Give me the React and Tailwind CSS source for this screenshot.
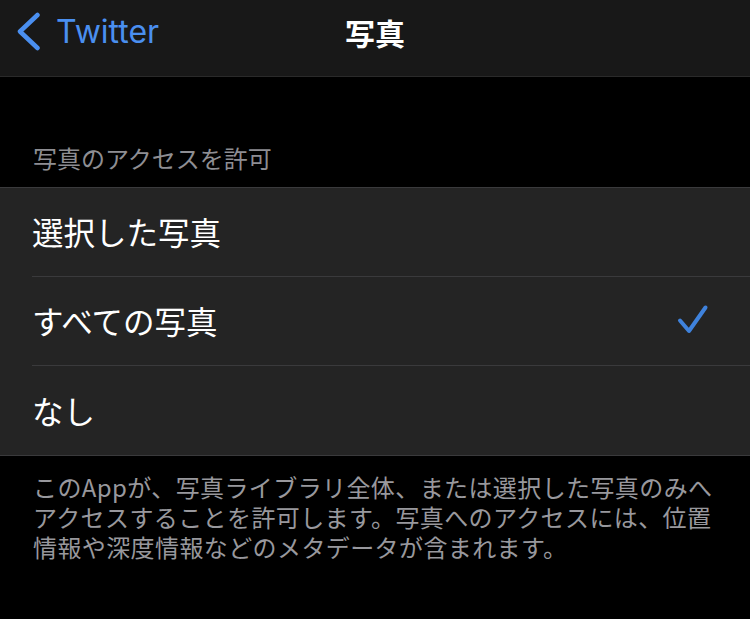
import React from "react";

const cjk = { fontFamily: '"Noto Sans CJK JP", "Noto Sans", sans-serif' };

function Row({ label, checked, last }) {
  return (
    <div className="flex">
      <div className="w-[32px] shrink-0" />
      <div
        className={
          "flex-1 h-[89px] flex items-center justify-between pr-[40px] " +
          (last ? "" : "border-b border-[#3a3a3c]")
        }
      >
        <span className="text-[31.5px] text-white leading-none" style={cjk}>
          {label}
        </span>
        {checked && (
          <svg width="34" height="34" viewBox="0 0 34 34" className="mr-[1px]">
            <path
              d="M5 16.5 L14 27 L30.5 3.5"
              fill="none"
              stroke="#3f82dc"
              strokeWidth="4"
              strokeLinecap="round"
              strokeLinejoin="round"
            />
          </svg>
        )}
      </div>
    </div>
  );
}

export default function App() {
  return (
    <div className="w-[750px] h-[619px] bg-black overflow-hidden" style={cjk}>
      <div className="h-[77px] bg-[#181818] border-b border-[#2a2a2a] grid grid-cols-[1fr_auto_1fr] items-center pb-[12px]">
        <div className="flex items-center pl-[16px]">
          <svg width="28" height="40" viewBox="0 0 28 40">
            <path
              d="M21.5 3 L4 19.5 L21.5 36"
              fill="none"
              stroke="#4a8ff0"
              strokeWidth="4.5"
              strokeLinecap="round"
              strokeLinejoin="round"
            />
          </svg>
          <span
            className="ml-[12px] text-[32px] text-[#4a8ff0] leading-none"
            style={{ fontFamily: 'Inter, "Liberation Sans", sans-serif' }}
          >
            Twitter
          </span>
        </div>
        <div className="text-[30px] font-bold text-white leading-none">写真</div>
        <div />
      </div>
      <div className="pt-[66px] pb-[14px] pl-[33px] text-[24px] leading-[30px] text-[#8e8e93]">
        写真のアクセスを許可
      </div>
      <div className="bg-[#242424] border-t border-b border-[#3a3a3c]">
        <Row label="選択した写真" />
        <Row label="すべての写真" checked />
        <Row label="なし" last />
      </div>
      <div className="pt-[16px] pl-[33px] text-[24px] leading-[30px] text-[#98989d] whitespace-nowrap tracking-[0.4px]">
        このAppが、写真ライブラリ全体、または選択した写真のみへ
        <br />
        アクセスすることを許可します。写真へのアクセスには、位置
        <br />
        情報や深度情報などのメタデータが含まれます。
      </div>
    </div>
  );
}
